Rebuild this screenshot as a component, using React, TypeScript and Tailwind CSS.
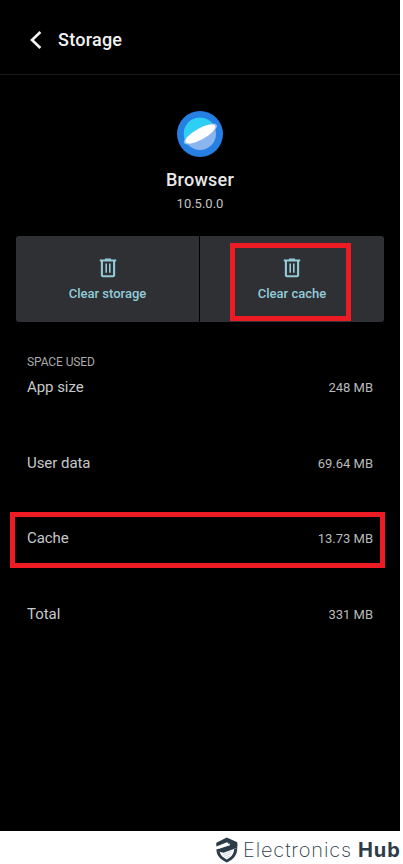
import React from 'react';

const usage = [
  { label: 'App size', value: '248 MB' },
  { label: 'User data', value: '69.64 MB' },
  { label: 'Cache', value: '13.73 MB', highlighted: true },
  { label: 'Total', value: '331 MB' },
];

const BackIcon: React.FC = () => (
  <svg width="14" height="20" viewBox="0 0 14 20" fill="none">
    <path d="M12.4 2 4 10l8.4 8" stroke="#f4f4f4" strokeWidth="2.6" />
  </svg>
);

const TrashIcon: React.FC = () => (
  <svg width="18" height="20" viewBox="0 0 18 20" fill="none" stroke="#93cbdb">
    <path d="M.8 2.5h16.4" strokeWidth="2" />
    <path d="M6 1.4h6" strokeWidth="1.8" />
    <path d="M2.9 2.5v14.7q0 1.1 1.1 1.1h10q1.1 0 1.1-1.1V2.5" strokeWidth="2.1" />
    <path d="M7.2 5.4v9.4M10.8 5.4v9.4" strokeWidth="1.6" />
  </svg>
);

const BrowserIcon: React.FC = () => (
  <svg width="46" height="46" viewBox="0 0 46 46">
    <circle cx="23" cy="23" r="23" fill="#267fe2" />
    <circle cx="23" cy="23" r="16" fill="#8ab5ee" />
    <path d="M8.6 30A16 16 0 1 1 37.2 15.2Z" fill="#2fcff3" />
    <ellipse cx="23.4" cy="23" rx="18.8" ry="5.6" fill="#8fc0f5" transform="rotate(-29 23.4 23)" />
    <ellipse cx="23.4" cy="23" rx="16.8" ry="5.5" fill="#fff" transform="rotate(-29 23.4 23)" />
  </svg>
);

const ShieldLogo: React.FC = () => (
  <svg width="22" height="26" viewBox="0 0 22 26">
    <path d="M.3 5.8 10.8.6l10.5 4.6v3.6L11 5.2.3 9.6Z" fill="#2b3c48" />
    <path d="M21.3 7.5v3.2L7.5 15.8.8 14.2.3 12.6 14 8.3 11 5.2Z" fill="#2b3c48" />
    <path d="M.5 13.6 3.8 15c.6 3.2 3 5.4 7 7.4 4.6-2.3 7-5.4 7.3-10.2l3.2-1.4c0 7.2-3.7 11.7-10.5 14.8C4.2 22.6.9 18.9.5 13.6Z" fill="#2b3c48" />
    <path d="m2.8 11.2 11-4.2" stroke="#fff" strokeWidth="1.1" />
    <path d="m6.4 18 9.2-3.6M8 19.4l7-2.8M9.8 20.8l4-1.6" stroke="#b4bbc0" strokeWidth=".6" />
  </svg>
);

const ActionButton: React.FC<{ label: string; highlighted?: boolean }> = ({ label, highlighted }) => (
  <button className="relative flex flex-1 flex-col items-center bg-[#2e3033] pt-[22px] text-[13px] font-medium text-[#93cbdb]">
    <TrashIcon />
    <span className="mt-[6px] leading-5">{label}</span>
    {highlighted && (
      <span className="absolute top-[7px] left-[30px] h-[78px] w-[121px] border-[5px] border-[#ed1c24]" />
    )}
  </button>
);

export default function App() {
  return (
    <div className="flex h-[864px] w-[403px] flex-col overflow-hidden bg-white font-['Roboto',sans-serif]">
      <main className="h-[831px] w-[400px] bg-black">
        <header className="flex h-[75px] items-center border-b border-[#191919] pt-[5px] pl-[28px]">
          <BackIcon />
          <h1 className="ml-4 text-[18px] font-medium tracking-[0.25px] text-[#f2f2f2]">Storage</h1>
        </header>

        <section className="flex flex-col items-center pt-9">
          <BrowserIcon />
          <h2 className="mt-[11px] text-[18px] leading-6 font-medium tracking-[0.25px] text-[#e8e8e8]">Browser</h2>
          <p className="mt-[2px] text-[13px] leading-5 text-[#c4c4c4]">10.5.0.0</p>
        </section>

        <div className="mx-4 mt-[22px] grid h-[86px] grid-cols-[183px_184px] gap-px overflow-hidden rounded-[3px]">
          <ActionButton label="Clear storage" />
          <ActionButton label="Clear cache" highlighted />
        </div>

        <section className="px-[27px] pt-[31px]">
          <h3 className="text-[12px] leading-[18px] tracking-[-0.1px] text-[#a9a9a9]">SPACE USED</h3>
          <ul className="-mt-[10px]">
            {usage.map((row) => (
              <li key={row.label} className="relative flex h-[75.5px] items-start justify-between pt-[16px]">
                <span className="text-[15px] leading-5 tracking-[-0.05px] text-[#c6c8ca]">{row.label}</span>
                <span className="pt-px text-[13px] leading-5 text-[#b9bbbd]">{row.value}</span>
                {row.highlighted && (
                  <span className="absolute top-0 -left-[17px] h-[56px] w-[375px] border-[5px] border-[#ed1c24]" />
                )}
              </li>
            ))}
          </ul>
        </section>
      </main>

      <footer className="flex h-[33px] items-start pt-[6px] pl-[216px]">
        <ShieldLogo />
        <p className="ml-[5px] font-['Inter',sans-serif] text-[20px] leading-[26px] whitespace-nowrap text-[#2b3c48]">
          <span className="font-extralight tracking-[0.85px]">Electronics</span>
          <span className="ml-[6px] font-bold tracking-[0.9px]">Hub</span>
        </p>
      </footer>
    </div>
  );
}
